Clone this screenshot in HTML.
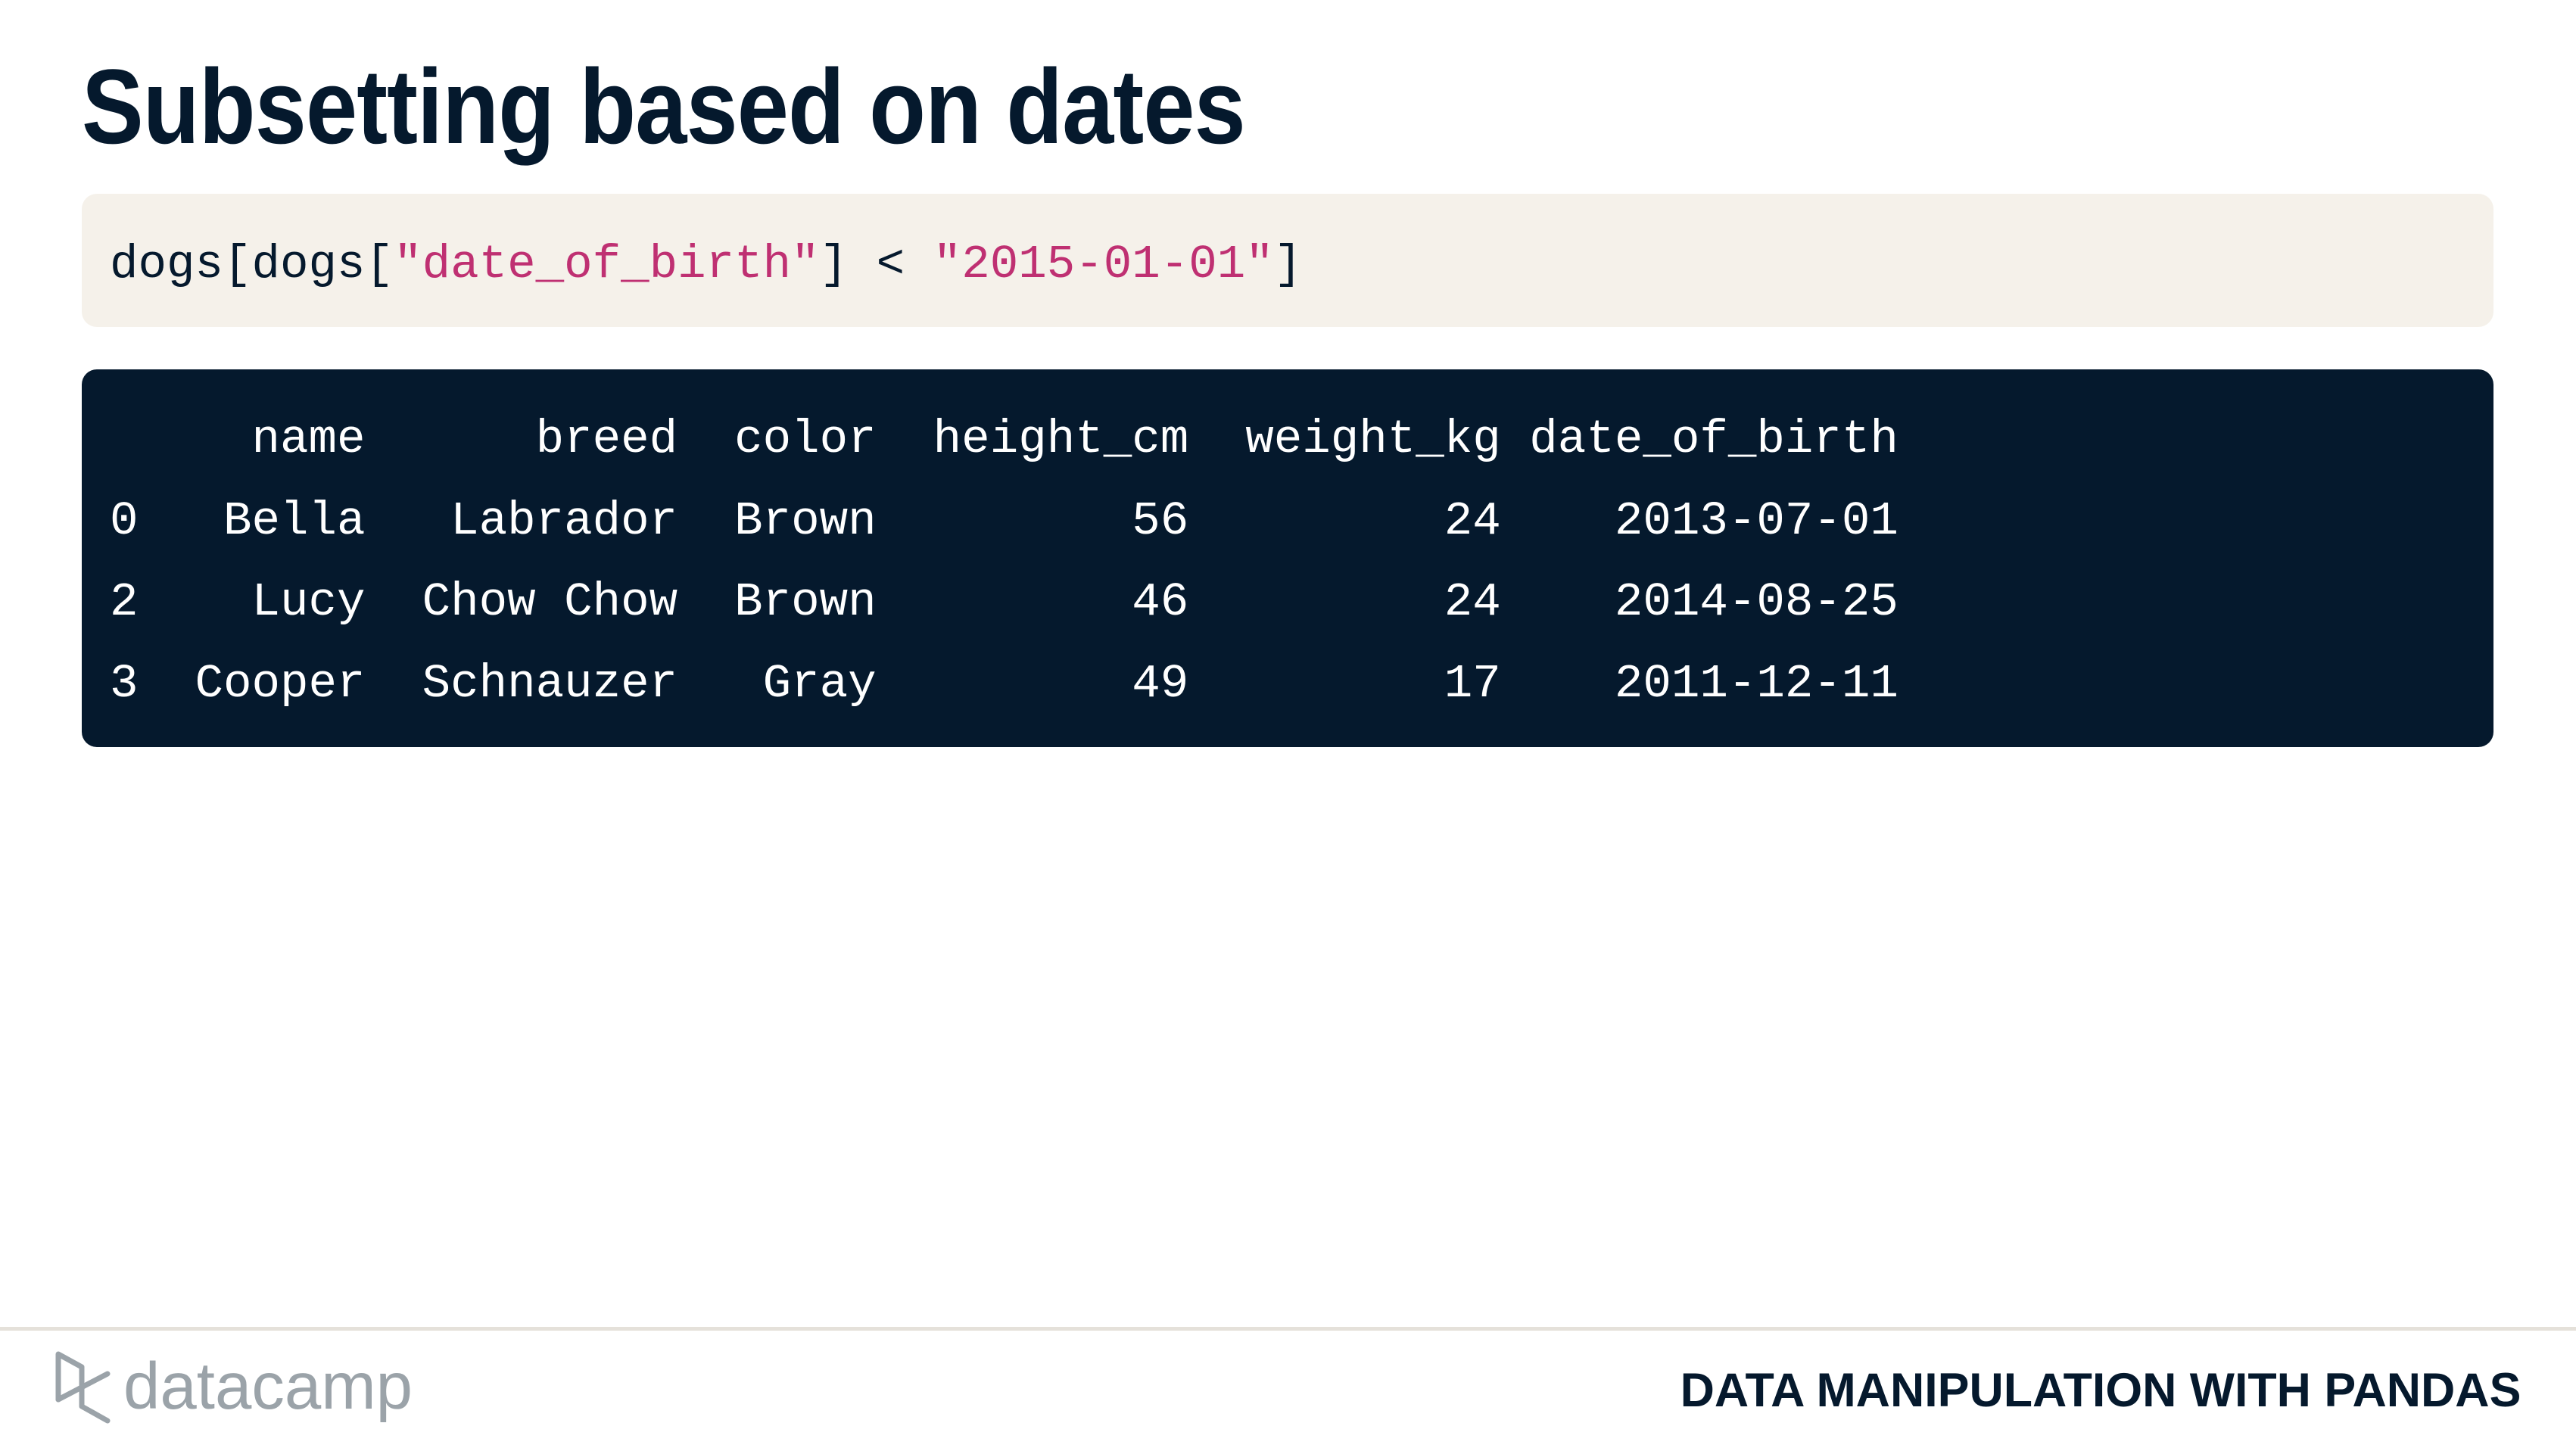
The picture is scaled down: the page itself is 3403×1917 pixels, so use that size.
<!DOCTYPE html>
<html><head><meta charset="utf-8"><style>
html,body{margin:0;padding:0;background:#fff;}
body{width:3403px;height:1917px;position:relative;overflow:hidden;}
.title{position:absolute;left:108px;top:71px;font:bold 140px/1 "Liberation Sans",sans-serif;color:#05192d;white-space:nowrap;transform:scaleX(0.875);transform-origin:left top;letter-spacing:-1px;}
.code{position:absolute;left:108px;top:256px;width:3186px;height:176px;background:#f5f1ea;border-radius:20px;}
.code pre{position:absolute;left:37px;top:63px;margin:0;font:62.5px/1 "Liberation Mono",monospace;color:#05192d;}
.s{color:#bf3072;}
.out{position:absolute;left:108px;top:488px;width:3186px;height:499px;background:#05192d;border-radius:20px;}
.out pre{position:absolute;left:37px;top:39px;margin:0;font:62.5px/107.5px "Liberation Mono",monospace;color:#fff;}
.line{position:absolute;left:0;top:1753px;width:3403px;height:5px;background:#e5e1da;}
.foot{position:absolute;right:73px;top:1806px;font:bold 63px/1 "Liberation Sans",sans-serif;color:#05192d;white-space:nowrap;transform:scaleX(0.995);transform-origin:right top;}
.logo{position:absolute;left:163px;top:1788px;font:87px/1 "Liberation Sans",sans-serif;color:#9ba3a9;letter-spacing:0px;}
</style></head><body>
<div class="title">Subsetting based on dates</div>
<div class="code"><pre>dogs[dogs[<span class="s">"date_of_birth"</span>] &lt; <span class="s">"2015-01-01"</span>]</pre></div>
<div class="out"><pre>     name      breed  color  height_cm  weight_kg date_of_birth
0   Bella   Labrador  Brown         56         24    2013-07-01
2    Lucy  Chow Chow  Brown         46         24    2014-08-25
3  Cooper  Schnauzer   Gray         49         17    2011-12-11</pre></div>
<div class="line"></div>
<svg style="position:absolute;left:0;top:0" width="3403" height="1917">
<g fill="none" stroke="#9ba3a9" stroke-width="7" stroke-linejoin="round" stroke-linecap="round">
<path d="M77,1849 L77,1789 L108,1806 L108,1858 L142,1877"/>
<path d="M77,1849 L142,1815"/>
</g></svg>
<div class="logo">datacamp</div>
<div class="foot">DATA MANIPULATION WITH PANDAS</div>
</body></html>
